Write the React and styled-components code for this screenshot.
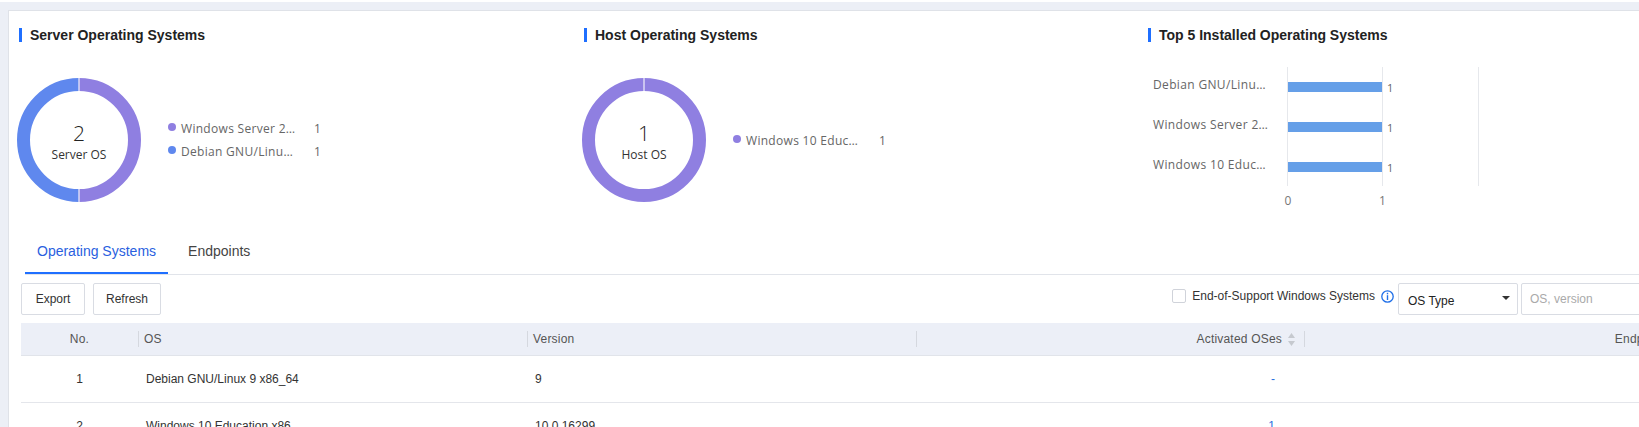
import React from 'react';
import styled, { createGlobalStyle } from 'styled-components';

const GlobalStyle = createGlobalStyle`
  html, body {
    margin: 0;
    padding: 0;
    overflow: hidden;
    background: #fff;
    font-family: "Liberation Sans", Arial, sans-serif;
  }
`;

const CHART_FONT = '"Open Sans", "Noto Sans", sans-serif';
const PURPLE = '#8f7fe1';
const BLUE = '#5f88ee';

const serverOs = [
  { name: 'Windows Server 2…', value: 1, color: PURPLE },
  { name: 'Debian GNU/Linu…', value: 1, color: BLUE },
];
const hostOs = [{ name: 'Windows 10 Educ…', value: 1, color: PURPLE }];
const topInstalled = ['Debian GNU/Linu…', 'Windows Server 2…', 'Windows 10 Educ…'];

const rows = [
  { no: 1, os: 'Debian GNU/Linux 9 x86_64', version: '9', activated: '-' },
  { no: 2, os: 'Windows 10 Education x86', version: '10.0.16299', activated: '1' },
];

function Donut({ data, total, label }) {
  const sum = data.reduce((acc, item) => acc + item.value, 0);
  const r = 55.5;
  const c = 62;
  const point = angle => [c + r * Math.sin(angle), c - r * Math.cos(angle)];
  let start = 0;

  return (
    <DonutSvg viewBox="0 0 124 124">
      {data.length === 1 ? (
        <circle cx={c} cy={c} r={r} fill="none" stroke={data[0].color} strokeWidth="13" />
      ) : (
        data.map(item => {
          const end = start + (item.value / sum) * Math.PI * 2;
          const [x1, y1] = point(start);
          const [x2, y2] = point(end);
          start = end;
          return (
            <path
              key={item.name}
              d={`M${x1} ${y1} A${r} ${r} 0 0 1 ${x2} ${y2}`}
              fill="none"
              stroke={item.color}
              strokeWidth="13"
            />
          );
        })
      )}
      <line x1={c} y1="0" x2={c} y2="13" stroke="#f2f1fb" strokeWidth="1.2" />
      {data.length > 1 && <line x1={c} y1="111" x2={c} y2="124" stroke="#f2f1fb" strokeWidth="1.2" />}
      <DonutTotal x={c} y="63">{total}</DonutTotal>
      <DonutLabel x={c} y="81">{label}</DonutLabel>
    </DonutSvg>
  );
}

function TopChart() {
  return (
    <BarSvg viewBox="0 0 345 150">
      {[139.5, 234.5, 330.5].map(x => (
        <line key={x} x1={x} y1="7" x2={x} y2="126" stroke="#e6e8ec" strokeWidth="1" />
      ))}
      {topInstalled.map((name, i) => (
        <g key={name}>
          <BarLabel x="5" y={29 + i * 40}>{name}</BarLabel>
          <rect x="140" y={22 + i * 40} width="94" height="10" fill="#659fe8" />
          <BarValue x="239" y={32 + i * 40}>1</BarValue>
        </g>
      ))}
      <AxisTick x="140" y="145">0</AxisTick>
      <AxisTick x="234.5" y="145">1</AxisTick>
    </BarSvg>
  );
}

function Legend({ data }) {
  return (
    <LegendList>
      {data.map(item => (
        <LegendItem key={item.name}>
          <LegendDot $color={item.color} />
          <LegendName>{item.name}</LegendName>
          <LegendValue>{item.value}</LegendValue>
        </LegendItem>
      ))}
    </LegendList>
  );
}

const SortIcon = () => (
  <svg width="7" height="13" viewBox="0 0 7 13">
    <path d="M3.5 0 L7 5 H0 Z" fill="#c6c9cf" />
    <path d="M3.5 13 L0 8 H7 Z" fill="#c6c9cf" />
  </svg>
);

function App() {
  return (
    <>
      <GlobalStyle />
      <TopStrip />
      <Page>
        <Card>
          <Charts>
            <ChartSection>
              <SectionTitle>Server Operating Systems</SectionTitle>
              <DonutRow>
                <Donut data={serverOs} total="2" label="Server OS" />
                <Legend data={serverOs} />
              </DonutRow>
            </ChartSection>
            <ChartSection>
              <SectionTitle>Host Operating Systems</SectionTitle>
              <DonutRow>
                <Donut data={hostOs} total="1" label="Host OS" />
                <Legend data={hostOs} />
              </DonutRow>
            </ChartSection>
            <ChartSection>
              <SectionTitle>Top 5 Installed Operating Systems</SectionTitle>
              <TopChart />
            </ChartSection>
          </Charts>

          <TabBar>
            <Tab $active>Operating Systems</Tab>
            <Tab>Endpoints</Tab>
          </TabBar>

          <Toolbar>
            <ButtonGroup>
              <Button $width={64}>Export</Button>
              <Button $width={68}>Refresh</Button>
            </ButtonGroup>
            <Filters>
              <CheckWrap>
                <CheckBox />
                <CheckText>End-of-Support Windows Systems</CheckText>
                <svg width="13" height="13" viewBox="0 0 13 13">
                  <circle cx="6.5" cy="6.5" r="5.7" fill="none" stroke="#1f6fe8" strokeWidth="1.3" />
                  <rect x="5.8" y="2.8" width="1.4" height="1.5" fill="#1f6fe8" />
                  <rect x="5.8" y="5.2" width="1.4" height="4.8" fill="#1f6fe8" />
                </svg>
              </CheckWrap>
              <SelectBox>
                OS Type
                <Caret />
              </SelectBox>
              <SearchInput placeholder="OS, version" />
            </Filters>
          </Toolbar>

          <Table>
            <HeadRow>
              <HeadCell><HeadLabel $align="center" $plain>No.</HeadLabel></HeadCell>
              <HeadCell><HeadLabel>OS</HeadLabel></HeadCell>
              <HeadCell><HeadLabel>Version</HeadLabel></HeadCell>
              <HeadCell><HeadLabel $align="flex-end">Activated OSes <SortIcon /></HeadLabel></HeadCell>
              <HeadCell><HeadLabel $align="flex-end">Endpoints <SortIcon /></HeadLabel></HeadCell>
            </HeadRow>
            {rows.map(row => (
              <BodyRow key={row.no}>
                <NoCell>{row.no}</NoCell>
                <TextCell>{row.os}</TextCell>
                <TextCell>{row.version}</TextCell>
                <LinkCell>{row.activated}</LinkCell>
                <LinkCell />
              </BodyRow>
            ))}
          </Table>
        </Card>
      </Page>
    </>
  );
}

const TopStrip = styled.div`
  height: 2px;
  background: #fff;
`;

const Page = styled.div`
  height: 425px;
  padding: 8px 0 0 8px;
  box-sizing: border-box;
  background: #eceff6;
  overflow: hidden;
`;

const Card = styled.main`
  width: 1800px;
  height: 500px;
  box-sizing: border-box;
  background: #fff;
  border: 1px solid #dfe2e8;
`;

const Charts = styled.section`
  display: grid;
  grid-template-columns: 565px 564px 565px;
  height: 217px;
  padding: 17px 0 0 10px;
  box-sizing: border-box;
`;

const ChartSection = styled.div`
  display: flex;
  flex-direction: column;
  align-items: flex-start;
`;

const SectionTitle = styled.h2`
  margin: 0;
  height: 14px;
  padding-left: 8px;
  border-left: 3px solid #1f6fff;
  font-size: 14px;
  line-height: 14px;
  font-weight: 700;
  color: #222;
`;

const DonutRow = styled.div`
  display: flex;
  align-items: center;
  margin: 36px 0 0 -2px;
`;

const DonutSvg = styled.svg`
  width: 124px;
  height: 124px;
  flex: none;
`;

const DonutTotal = styled.text`
  font-family: ${CHART_FONT};
  font-size: 21px;
  font-weight: 300;
  text-anchor: middle;
  fill: #222;
`;

const DonutLabel = styled.text`
  font-family: ${CHART_FONT};
  font-size: 12px;
  text-anchor: middle;
  fill: #333;
`;

const LegendList = styled.ul`
  list-style: none;
  margin: 0 0 0 27px;
  padding: 0;
`;

const LegendItem = styled.li`
  display: flex;
  align-items: center;
  height: 23px;
  font-family: ${CHART_FONT};
  font-size: 12px;
  letter-spacing: 0.3px;
  color: #666;
`;

const LegendDot = styled.i`
  width: 8px;
  height: 8px;
  margin: -3px 5px 0 0;
  border-radius: 50%;
  background: ${p => p.$color};
`;

const LegendName = styled.span`
  width: 133px;
  white-space: nowrap;
`;

const LegendValue = styled.span`
  color: #666;
`;

const BarSvg = styled.svg`
  width: 345px;
  height: 150px;
  margin-top: 18px;
`;

const BarLabel = styled.text`
  font-family: ${CHART_FONT};
  font-size: 12px;
  letter-spacing: 0.35px;
  fill: #666;
`;

const BarValue = styled.text`
  font-family: ${CHART_FONT};
  font-size: 11px;
  fill: #666;
`;

const AxisTick = styled.text`
  font-family: ${CHART_FONT};
  font-size: 12px;
  text-anchor: middle;
  fill: #777;
`;

const TabBar = styled.nav`
  display: flex;
  height: 47px;
  margin-left: 16px;
  box-sizing: border-box;
  border-bottom: 1px solid #e1e4ea;
`;

const Tab = styled.div`
  height: 46px;
  box-sizing: border-box;
  padding: 0 12px;
  margin-right: 8px;
  font-size: 14px;
  line-height: 46px;
  color: ${p => (p.$active ? '#2a5fe0' : '#444')};
  border-bottom: 2px solid ${p => (p.$active ? '#1f6fff' : 'transparent')};
`;

const Toolbar = styled.div`
  display: flex;
  justify-content: space-between;
  align-items: flex-start;
  width: 1671px;
  margin: 8px 0 8px 12px;
`;

const ButtonGroup = styled.div`
  display: flex;
  gap: 8px;
`;

const Button = styled.button`
  width: ${p => p.$width}px;
  height: 32px;
  padding: 0;
  background: #fff;
  border: 1px solid #d9dce3;
  border-radius: 2px;
  font-family: inherit;
  font-size: 12px;
  color: #333;
`;

const Filters = styled.div`
  display: flex;
  align-items: flex-start;
  gap: 3px;
`;

const CheckWrap = styled.label`
  display: flex;
  align-items: center;
  gap: 6px;
  height: 26px;
  margin-right: 1px;
`;

const CheckBox = styled.span`
  width: 14px;
  height: 14px;
  box-sizing: border-box;
  border: 1px solid #d0d3da;
  border-radius: 2px;
`;

const CheckText = styled.span`
  font-size: 12px;
  color: #333;
`;

const SelectBox = styled.div`
  display: flex;
  align-items: center;
  justify-content: space-between;
  width: 120px;
  height: 32px;
  box-sizing: border-box;
  padding: 3px 7px 0 9px;
  border: 1px solid #d9dce3;
  border-radius: 2px;
  font-size: 12px;
  color: #222;
`;

const Caret = styled.i`
  width: 0;
  height: 0;
  margin-top: -5px;
  border-left: 4px solid transparent;
  border-right: 4px solid transparent;
  border-top: 4px solid #333;
`;

const SearchInput = styled.input`
  width: 171px;
  height: 32px;
  box-sizing: border-box;
  padding: 0 8px;
  border: 1px solid #d9dce3;
  border-radius: 2px;
  outline: none;
  font-family: inherit;
  font-size: 12px;
  &::placeholder {
    color: #aaa;
  }
`;

const Table = styled.div`
  width: 1671px;
  margin-left: 12px;
`;

const HeadRow = styled.div`
  display: grid;
  grid-template-columns: 117px 389px 389px 388px 388px;
  height: 32px;
  background: #eceff7;
  border-bottom: 1px solid #e1e4ea;
`;

const HeadCell = styled.div`
  display: flex;
  align-items: center;
`;

const HeadLabel = styled.span`
  flex: 1;
  display: flex;
  align-items: center;
  justify-content: ${p => p.$align || 'flex-start'};
  gap: 6px;
  height: 16px;
  padding: 0 ${p => (p.$align === 'flex-end' ? '9px' : '5px')} 0 5px;
  border-left: ${p => (p.$plain ? 'none' : '1px solid #d5d8df')};
  font-size: 12px;
  letter-spacing: 0.2px;
  color: #555;
`;

const BodyRow = styled.div`
  display: grid;
  grid-template-columns: 117px 389px 389px 388px 388px;
  align-items: center;
  height: 47px;
  box-sizing: border-box;
  border-bottom: 1px solid #e4e6eb;
  font-size: 12px;
  color: #333;
`;

const NoCell = styled.div`
  text-align: center;
`;

const TextCell = styled.div`
  padding-left: 8px;
`;

const LinkCell = styled.div`
  padding-right: 29px;
  text-align: right;
  color: #2a6fe0;
`;

export default App;
